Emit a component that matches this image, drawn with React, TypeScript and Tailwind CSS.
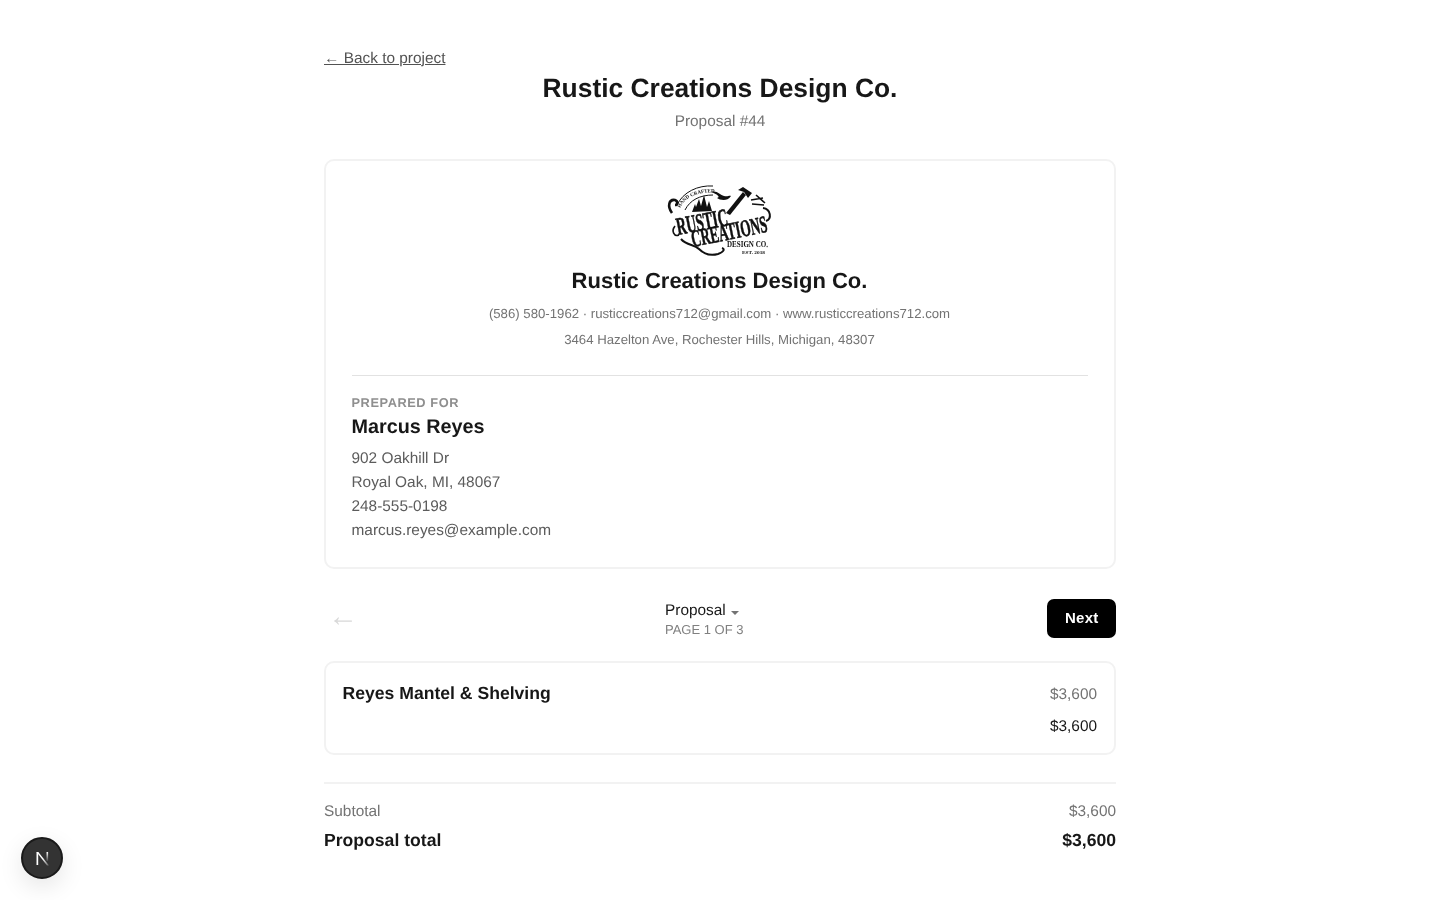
import React from "react";

function Logo() {
  return (
    <svg width="106" height="72" viewBox="0 0 106 72" className="block overflow-visible" style={{ fontFamily: '"Liberation Serif", serif' }}>
      <defs>
        <path id="arc" d="M13 23 C18 12 32 5 54 8" fill="none" />
      </defs>
      <path d="M5 28 C0 21 2 14 8 15 C11 16 11 20 8 20" fill="none" stroke="#111" strokeWidth="2.6" />
      <path d="M10 20 C16 7 31 0 46 1" fill="none" stroke="#111" strokeWidth="1" />
      <path d="M18 25 C23 15 33 10 46 10" fill="none" stroke="#111" strokeWidth="1" />
      <text fontSize="5" fontWeight="700" fill="#111"><textPath href="#arc" startOffset="0">HAND CRAFTED</textPath></text>
      <path d="M25 27 L28 19 L29 22 L32 14 L34 21 L37 10 L40 22 L42 16 L45 26 Z" fill="#111" />
      <path d="M44 7 C50 5 53 10 57 11 C61 12 62 10 64 11 C60 17 53 15 50 13 C54 12 50 9 44 7Z" fill="#111" />
      <path d="M59 28 L76 7 L79 10 L63 30Z" fill="#111" />
      <path d="M71 5 L76 2 L85 8 L81 13 L77 7Z" fill="#111" />
      <path d="M84 15 L96 13 M85 19 L97 20 M89 10 L98 18" stroke="#111" strokeWidth="1.6" fill="none" />
      <text x="11" y="50" fontSize="25" fontWeight="700" fill="#111" stroke="#111" strokeWidth="0.6" transform="rotate(-11 11 50)" textLength="52" lengthAdjust="spacingAndGlyphs">RUSTIC</text>
      <text x="26" y="62" fontSize="24" fontWeight="700" fill="#111" stroke="#111" strokeWidth="0.6" transform="rotate(-11.5 26 62)" textLength="77" lengthAdjust="spacingAndGlyphs">CREATIONS</text>
      <text x="60" y="62" fontSize="9" fontWeight="700" fill="#111" textLength="41" lengthAdjust="spacingAndGlyphs">DESIGN CO.</text>
      <text x="75" y="69" fontSize="4.5" fontWeight="700" fill="#111" textLength="23" lengthAdjust="spacingAndGlyphs">EST. 2018</text>
      <path d="M14 54 C20 61 27 59 32 64 C37 69 44 71 51 69 C57 67 58 64 55 63" fill="none" stroke="#111" strokeWidth="2" />
      <path d="M8 41 C4 46 7 52 12 50" fill="none" stroke="#111" strokeWidth="1.6" />
      <path d="M96 23 C104 24 105 34 99 36" fill="none" stroke="#111" strokeWidth="2" />
    </svg>
  );
}

function NextBadge() {
  return (
    <div className="fixed left-[21px] bottom-[21px] w-[42px] h-[42px] rounded-full bg-[#333] border-2 border-[#1a1a1a] shadow-[0_8px_24px_rgba(0,0,0,0.1)] flex items-center justify-center">
      <svg width="15" height="15" viewBox="0 0 15 15" fill="none">
        <defs>
          <linearGradient id="nd" x1="0" y1="0" x2="1" y2="1">
            <stop offset="0.5" stopColor="#fff" />
            <stop offset="1" stopColor="#fff" stopOpacity="0.2" />
          </linearGradient>
          <linearGradient id="ns" x1="0" y1="0" x2="0" y2="1">
            <stop offset="0" stopColor="#fff" />
            <stop offset="1" stopColor="#fff" stopOpacity="0.1" />
          </linearGradient>
        </defs>
        <path d="M1.5 1 H3.2 V14 H1.5Z" fill="#fff" />
        <path d="M1.5 1 H3.3 L14 14.5 H12Z" fill="url(#nd)" />
        <rect x="11.5" y="1" width="1.6" height="9" fill="url(#ns)" />
      </svg>
    </div>
  );
}

export default function App() {
  return (
    <div className="min-h-[900px] bg-white font-['Liberation_Sans',Arial,sans-serif] text-[#171717] [text-rendering:geometricPrecision] will-change-transform">
      <div className="w-[792px] mx-auto pt-[47px] pb-10">
        <a className="block h-6 text-[15.4px] leading-6 text-[#525252] underline">← Back to project</a>
        <h1 className="text-center text-[26.4px] leading-[34px] font-bold">Rustic Creations Design Co.</h1>
        <p className="mt-[5px] text-center text-[15.4px] leading-6 text-[#737373]">Proposal #44</p>

        <section className="mt-[25px] h-[409.5px] border-2 border-[#f2f2f2] rounded-[10px] pl-[25.5px] pr-[26.5px] pt-[24px]">
          <div className="flex justify-center"><Logo /></div>
          <h2 className="mt-[6px] text-center text-[22px] leading-[36px] font-bold">Rustic Creations Design Co.</h2>
          <p className="mt-[2px] text-center text-[13.2px] leading-[26px] text-[#737373]">(586) 580-1962 · rusticcreations712@gmail.com · www.rusticcreations712.com</p>
          <p className="text-center text-[13.2px] leading-[26px] text-[#737373]">3464 Hazelton Ave, Rochester Hills, Michigan, 48307</p>
          <div className="mt-[22px] border-t border-[#e2e2e2]" />
          <p className="mt-[17px] text-[12.8px] leading-5 font-bold text-[#8f8f8f] tracking-[0.56px]">PREPARED FOR</p>
          <h3 className="text-[19.8px] leading-[28px] font-bold">Marcus Reyes</h3>
          <div className="mt-[6px] text-[15.4px] leading-6 text-[#5c5c5c]">
            <p>902 Oakhill Dr</p>
            <p>Royal Oak, MI, 48067</p>
            <p>248-555-0198</p>
            <p>marcus.reyes@example.com</p>
          </div>
        </section>

        <nav className="mt-[30px] h-10 flex items-center justify-between">
          <span className="w-[68px] pl-[4px] mb-[3px] text-[30px] leading-none text-[#d9d9d9]">←</span>
          <div className="mr-[31px] mt-[2px]">
            <div className="flex items-center text-[15.4px] leading-5 mt-[1px] text-[#171717]">
              Proposal
              <span className="ml-[5px] mt-[3px] w-0 h-0 border-x-[4px] border-x-transparent border-t-[4px] border-t-[#737373]" />
            </div>
            <div className="text-[13px] leading-[18px] text-[#808080]">PAGE 1 OF 3</div>
          </div>
          <button className="w-[68.5px] h-[39.5px] rounded-[7px] bg-black text-white text-[15px] tracking-[0.3px] font-bold">Next</button>
        </nav>

        <section className="mt-[22px] h-[94px] border-2 border-[#f2f2f2] rounded-[10px] pl-[16.5px] pr-[17px] pt-[17px]">
          <div className="flex justify-between items-baseline h-6">
            <span className="text-[17.6px] font-bold">Reyes Mantel &amp; Shelving</span>
            <span className="text-[15.4px] text-[#737373]">$3,600</span>
          </div>
          <div className="mt-[11px] h-6 leading-6 text-right text-[15.4px] text-[#171717]">$3,600</div>
        </section>

        <div className="mt-[27px] border-t-2 border-[#f2f2f2] pt-[16px]">
          <div className="flex justify-between text-[15.4px] leading-6 text-[#737373]"><span>Subtotal</span><span>$3,600</span></div>
          <div className="mt-[1px] flex justify-between text-[17.6px] leading-[30px] font-bold"><span>Proposal total</span><span>$3,600</span></div>
        </div>
      </div>
      <NextBadge />
    </div>
  );
}
